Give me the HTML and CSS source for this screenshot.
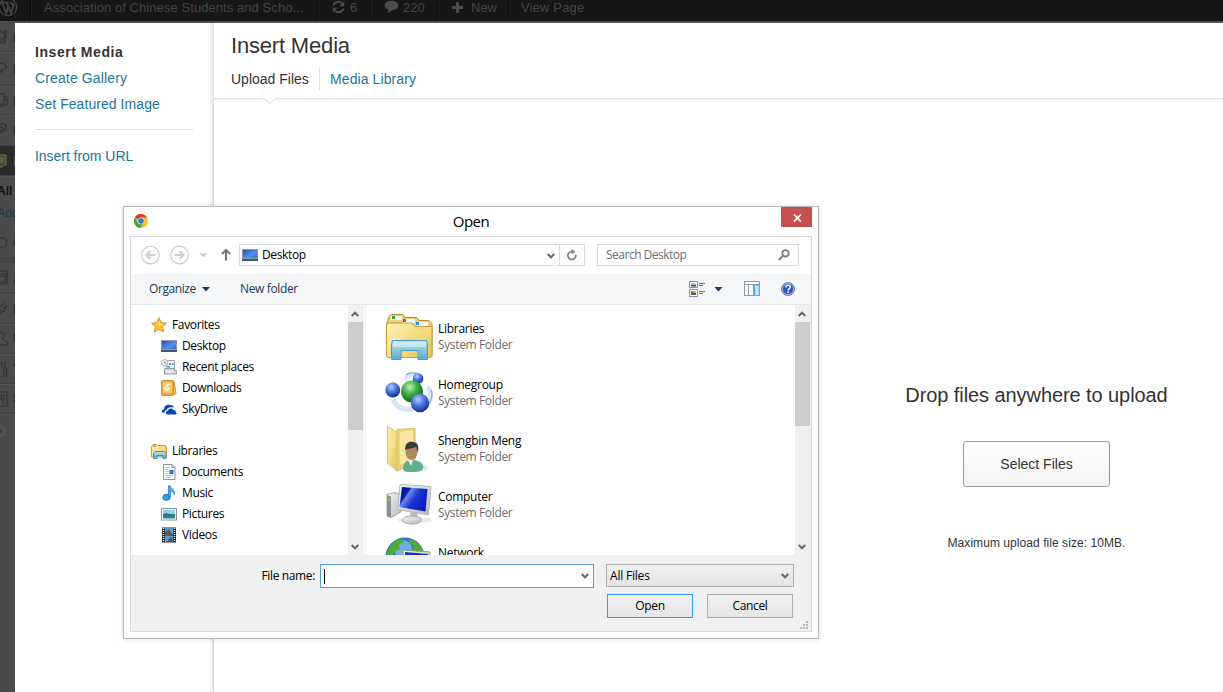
FILE: index.html
```html
<!DOCTYPE html>
<html lang="en">
<head>
<meta charset="utf-8">
<title>Insert Media</title>
<link rel="stylesheet" href="styles.css">
</head>
<body>
<svg class="defs" width="0" height="0">
  <defs>
    <linearGradient id="screen" x1="0" y1="0" x2="1" y2="1"><stop offset="0" stop-color="#2450a8"/><stop offset=".6" stop-color="#5590ee"/><stop offset="1" stop-color="#3468cc"/></linearGradient>
    <linearGradient id="folder" x1="0" y1="0" x2="1" y2="1"><stop offset="0" stop-color="#fdf3b4"/><stop offset="1" stop-color="#e9c552"/></linearGradient>
    <linearGradient id="stand" x1="0" y1="0" x2="0" y2="1"><stop offset="0" stop-color="#b9e6f6"/><stop offset="1" stop-color="#4ba8d8"/></linearGradient>
    <radialGradient id="blueball" cx=".4" cy=".3" r=".7"><stop offset="0" stop-color="#b4cdff"/><stop offset=".5" stop-color="#4a74e0"/><stop offset="1" stop-color="#14308f"/></radialGradient>
    <radialGradient id="greenball" cx=".4" cy=".3" r=".7"><stop offset="0" stop-color="#c3f3b4"/><stop offset=".5" stop-color="#36a83c"/><stop offset="1" stop-color="#0d6a1c"/></radialGradient>
    <linearGradient id="monitor" x1="0" y1="0" x2="1" y2=".6"><stop offset="0" stop-color="#000d86"/><stop offset=".3" stop-color="#0a1fae"/><stop offset=".36" stop-color="#6b8cf0"/><stop offset=".6" stop-color="#1c37d0"/><stop offset="1" stop-color="#0819c4"/></linearGradient>
    <linearGradient id="metal" x1="0" y1="0" x2="1" y2="1"><stop offset="0" stop-color="#f6f6f6"/><stop offset="1" stop-color="#b5b8bc"/></linearGradient>
    <symbol id="desktop" viewBox="0 0 16 14"><path d="M0 1h16v12H0z" fill="#8c9bb4"/><path d="M1 2h14v8H1z" fill="url(#screen)"/><path d="M0 11h16v2H0z" fill="#46546e"/></symbol>
    <symbol id="chev" viewBox="0 0 8 6"><path d="M.7 1 4 4.300 7.300 1" fill="none" stroke="#666" stroke-width="2"/></symbol>
    <symbol id="chevup" viewBox="0 0 8 6"><path d="M.7 5 4 1.700 7.300 5" fill="none" stroke="#666" stroke-width="2"/></symbol>
  </defs>
</svg>
<div class="page">
  <header class="adminbar">
    <div class="ab wp"><svg width="20" height="20" viewBox="0 0 20 20"><circle cx="10" cy="10" r="8.7" fill="none" stroke="#444" stroke-width="1.3"/><path d="M4 5.500 8.300 16 10.200 10 8.600 5.500M8.600 5.500 13 16l3.200-9.500M2.500 5.500h8M12 5l3 3" fill="none" stroke="#444" stroke-width="1.900"/></svg></div>
    <div class="ab site">Association of Chinese Students and Scho...</div>
    <div class="ab upd"><svg width="15" height="14" viewBox="0 0 14 14"><path d="M1.800 5.500C3 1.500 8 .8 10.500 3.300M12.200 8.500C11 12.500 6 13.200 3.500 10.700" fill="none" stroke="#4b4b4b" stroke-width="2"/><path d="M12.800 1.200v5H8zM1.200 12.800v-5H6z" fill="#4b4b4b"/></svg><span>6</span></div>
    <div class="ab com"><svg width="15" height="14" viewBox="0 0 15 14"><path d="M7.500.8c4 0 6.800 2 6.800 4.800S11.500 10.300 8 10.300L3.800 13.600l.5-3.800C2 9 .7 7.500.7 5.600.7 2.800 3.500.8 7.500.8z" fill="#4b4b4b"/></svg><span>220</span></div>
    <div class="ab new"><svg width="11" height="11" viewBox="0 0 11 11"><path d="M4 0h3v4h4v3H7v4H4V7H0V4h4z" fill="#4b4b4b"/></svg><span>New</span></div>
    <div class="ab view">View Page</div>
  </header>
  <div class="below">
    <nav class="adminmenu">
      <div class="am h29"><svg width="8" height="16"><path d="M-6 8 1 2l6 6M5 7v7H-4M1 14V9h3v5M4 4V2h2v4" class="ln"/></svg><b>D</b></div>
      <div class="am h34"><svg width="8" height="16"><path d="M0 3l3-1 4 4-2 2-2 0-3 4M0 9l3 2" class="ln"/></svg><b>P</b></div>
      <div class="am h29"><svg width="8" height="16"><path d="M0 2h4v10H0M4 5h3v8H5M4 8h3M0 12h3v2H0" class="ln"/></svg><b>M</b></div>
      <div class="am h31"><svg width="8" height="16"><path d="M0 3c3-3 7-1 6 3-1 3-4 4-6 5M0 6c1-2 4-1 3 1L0 9" class="ln"/></svg><b>L</b></div>
      <div class="am h30 on"><svg width="8" height="16"><path d="M0 2h6v10H4l-2 2H0M0 5h4M0 7h4M0 9h4" class="lt"/></svg><b>P</b></div>
      <div class="sub"><span class="all">All</span><span class="add">Add</span></div>
      <div class="am h30"><svg width="8" height="16"><path d="M0 3h3c5 0 5 9 0 9H0" class="ln"/></svg><b>C</b></div>
      <div class="am h36 gap"><svg width="8" height="16"><path d="M0 1h7v13H0M0 4h7M0 6h5v6H0" class="ln"/></svg><b>A</b></div>
      <div class="am h30"><svg width="8" height="16"><path d="M0 6 4 2M3 8l4-4M0 9c4 3 6 0 6-3M0 13l3-3" class="ln"/></svg><b>P</b></div>
      <div class="am h30"><svg width="8" height="16"><path d="M0 1c5 0 5 6 2 7 4 0 6 4 5 6H0" class="ln"/></svg><b>U</b></div>
      <div class="am h30"><svg width="8" height="16"><path d="M0 2h2v5M5 0v7M3.500 8h3v7h-3z" class="ln"/></svg><b>T</b></div>
      <div class="am h30"><svg width="8" height="16"><path d="M0 1h7v14H0M1 4h3v4H1zM3 8v5" class="ln"/></svg><b>S</b></div>
      <div class="am h34 last"><svg width="8" height="16"><circle cx="0" cy="8" r="7.500" fill="#525252" stroke="#444"/><path d="M-1 8l3-3v6z" fill="#3c3c3c"/></svg></div>
    </nav>
    <div class="modal">
      <aside class="side">
        <span class="link current">Insert Media</span>
        <span class="link">Create Gallery</span>
        <span class="link feat">Set Featured Image</span>
        <hr>
        <span class="link url">Insert from URL</span>
      </aside>
      <main class="main">
        <div class="head">
          <h1>Insert Media</h1>
          <div class="tabs"><span class="tab active">Upload Files</span><span class="tab">Media Library</span></div>
          <svg class="notch" width="12" height="7"><path d="M0 0h12L6 5.500z" fill="#fff"/><path d="M.5.5 6 5.500 11.500.5" fill="none" stroke="#dfdfdf"/></svg>
        </div>
        <div class="drop">
          <h2>Drop files anywhere to upload</h2>
          <div class="select">Select Files</div>
          <p>Maximum upload file size: 10MB.</p>
        </div>
      </main>
    </div>
  </div>

  <section class="dialog">
    <div class="titlebar">
      <svg class="chrome" width="16" height="16" viewBox="0 0 16 16"><circle cx="8" cy="8" r="7" fill="#f4c91f"/><path d="M8 8 1.900 4.500A7 7 0 0 1 14.100 4.500H8z" fill="#d93a2b"/><path d="M1.900 4.500A7 7 0 0 0 7.500 15L11 9.500 8 8 4.900 9.700z" fill="#3fa648"/><circle cx="8" cy="8" r="3.500" fill="#dbe8f2"/><circle cx="8" cy="8" r="2.800" fill="#3b7bc4"/></svg>
      <span class="dtitle">Open</span>
      <div class="close"><svg width="9" height="8" viewBox="0 0 9 8"><path d="M1 .5 8 7.500M8 .5 1 7.500" stroke="#fff" stroke-width="1.700"/></svg></div>
    </div>
    <div class="inner">
      <div class="nav">
        <svg width="108" height="37" viewBox="131 237 108 37" fill="none">
          <g stroke="#cdcdcd"><circle cx="150.500" cy="255" r="8.800" stroke-width="1.200"/><circle cx="179.500" cy="255" r="8.800" stroke-width="1.200"/><path d="M155.500 255h-9M150.500 251l-4 4 4 4M174.500 255h9M179.500 251l4 4-4 4" stroke-width="2.200"/></g>
          <path d="M199.500 253.500h7.500l-3.700 3.700z" fill="#c9c9c9"/>
          <path d="M226 260.500v-10M222 254l4-4 4 4" stroke="#777" stroke-width="2"/>
        </svg>
        <div class="address"><svg width="16" height="14"><use href="#desktop"/></svg><span>Desktop</span><svg class="achev" width="8" height="6"><use href="#chev"/></svg>
          <div class="refresh"><svg width="12" height="12" viewBox="0 0 12 12"><path d="M7 2.700A4 4 0 1 0 9.800 6" fill="none" stroke="#808080" stroke-width="1.700"/><path d="M5.500 0 9.500 2.700 5.500 5.300z" fill="#808080"/></svg></div>
        </div>
        <div class="search"><span>Search Desktop</span><svg width="12" height="12" viewBox="0 0 12 12"><circle cx="7.500" cy="4.300" r="3.200" fill="none" stroke="#808080" stroke-width="1.900"/><path d="M5 6.800.8 11" stroke="#808080" stroke-width="2"/></svg></div>
      </div>
      <div class="toolbar">
        <span class="org">Organize</span><svg class="c1" width="8" height="5"><path d="M0 0h8L4 4.500z" fill="#1e395b"/></svg>
        <span class="nf">New folder</span>
        <svg class="tools" width="120" height="30" viewBox="685 274 120 30">
          <g fill="#fff" stroke="#8593a8"><rect x="689.500" y="281.500" width="8" height="6"/><rect x="689.500" y="289.500" width="8" height="7"/></g>
          <path d="M691 283h5v2h-5z" fill="#8fd0e8"/><path d="M691 285h5v1.500h-5z" fill="#264c6c"/><path d="M691 291h3v2h-3z" fill="#53a63d"/><path d="M694 291h2v2h-2z" fill="#eeb331"/><path d="M691 293h2v2h-2z" fill="#d5362f"/><path d="M693 293h3v2h-3z" fill="#375abe"/>
          <path d="M699 283.500h6M699 285.500h4M699 291.500h6M699 293.500h4" stroke="#6b7280"/>
          <path d="M714.500 287h8l-4 4.500z" fill="#1e395b"/>
          <rect x="744.500" y="281.500" width="15" height="14" fill="#fff" stroke="#8f979f"/><path d="M744 284.500h16M748.500 284v12M753.500 284v12" stroke="#8f979f"/><path d="M754.500 285h5v10.500h-5z" fill="#b9e0fa" stroke="#5aa5e2"/>
          <circle cx="788" cy="289" r="6.500" fill="#2b55c0" stroke="#7683a5"/><circle cx="788" cy="289" r="5.600" fill="none" stroke="#c3d1f2" stroke-width=".8"/><path d="M785.900 287.400c0-2.900 4.400-2.700 4.400-.2 0 1.500-2.200 1.500-2.200 3.200M788.100 291.300v1.600" fill="none" stroke="#fff" stroke-width="1.500"/>
        </svg>
      </div>
      <div class="content">
        <div class="tree">
          <div class="row top"><svg width="16" height="16" viewBox="0 0 16 16"><path d="M8 .8 10.200 5.700 15.500 6.200 11.500 9.800 12.800 15 8 12.300 3.200 15 4.500 9.800.5 6.200 5.800 5.700z" fill="#fbc43d" stroke="#e58a1f"/><path d="M8 3 9.400 6.600 12.500 7 8 9z" fill="#fff0a8"/></svg><span>Favorites</span></div>
          <div class="row"><svg width="16" height="14"><use href="#desktop"/></svg><span>Desktop</span></div>
          <div class="row"><svg width="16" height="16" viewBox="0 0 16 16"><path d="M5 1.500h8.500v9H5z" fill="#f5f8fb" stroke="#a2a8b0"/><path d="M3.500 9.500h10v2h2v3.500h-12z" fill="#d8dce0" stroke="#989ea4"/><path d="M8 4h2v2H8zM11 4h1.500v2H11zM6 7h3v1.500H6z" fill="#3a93d9"/><path d="M5.500 13h6" stroke="#fff"/><circle cx="3.700" cy="3.700" r="3.200" fill="#fff" stroke="#aaa"/><path d="M3.700 2v2h1.500" fill="none" stroke="#777"/></svg><span>Recent places</span></div>
          <div class="row"><svg width="16" height="16" viewBox="0 0 16 16"><path d="M10 1.500h3l2 12-3 1.500z" fill="#f6ce7a" stroke="#cf9427"/><rect x=".5" y=".5" width="12" height="15" rx="1" fill="#f5a83a" stroke="#d98a1d"/><path d="M2 2h9v11H2z" fill="#f9c774"/><path d="M10 4C6.500 4 5 6 5 9M2.500 7.500 5 10.500 8.500 8" fill="none" stroke="#fff4d6" stroke-width="1.600"/></svg><span>Downloads</span></div>
          <div class="row"><svg width="16" height="16" viewBox="0 0 16 16"><path d="M3.500 12C0 12 .2 8.500 3 8.300 3 5 6 3 9 4.200c2-.8 3.500.6 3.800 2.600C9 5.500 6 7 6 8.800 3.800 9.200 3.200 11 3.500 12z" fill="#0b47b4"/><path d="M6.500 13.500c-2.500-.5-2-3.700.6-3.900.3-2.500 4.200-3.100 5.400-.6 2.200 0 2.200 1.500 2.100 1.900 1.600.6 1.100 2.600-.6 2.600z" fill="#0b47b4"/></svg><span>SkyDrive</span></div>
          <div class="row"></div>
          <div class="row top"><svg width="16" height="16" viewBox="0 0 16 16"><path d="M.5 3.500 2 1.500h4l1 1h7.500l1 1.500v10H.5z" fill="url(#folder)" stroke="#c99b3d"/><path d="M2 3h3" stroke="#45a545"/><path d="M2.500 15.500v-5l1.500-2h9.500l1.500 2v5h-3v-3h-6v3z" fill="url(#stand)" stroke="#3a93c8"/></svg><span>Libraries</span></div>
          <div class="row"><svg width="16" height="16" viewBox="0 0 16 16"><path d="M2.500.5h8.500l3 3v12H2.500z" fill="#fbfcfe" stroke="#8a93a0"/><path d="M11 .5v3h3" fill="#e0e5ec" stroke="#8a93a0"/><path d="M4.500 3.500h4M4.500 5.500h3M4.500 7.500h3M4.500 9.500h3M4.500 11.500h8M4.500 13.500h6" stroke="#b6b4d8"/><path d="M8.500 6h4v4h-4z" fill="#2d6fbb"/></svg><span>Documents</span></div>
          <div class="row"><svg width="16" height="16" viewBox="0 0 16 16"><ellipse cx="5.500" cy="12.300" rx="3.700" ry="3" fill="#2f9fe0" stroke="#1676bb"/><path d="M7.500 12V.8h1.700c.5 3 4.600 3.500 4.300 8.700-1-2.500-2.200-3.200-4-3.500v6z" fill="#46aee8" stroke="#1b79bb" stroke-width=".7"/></svg><span>Music</span></div>
          <div class="row"><svg width="16" height="14" viewBox="0 0 16 14"><rect x=".5" y="1.500" width="15" height="11.500" fill="#fff" stroke="#8c949c"/><path d="M2 3h12v5H2z" fill="#8fd0f2"/><path d="M2 7.500c4-3 7 1 12-.5V9H2z" fill="#2d7f59"/><path d="M2 9h12v2.500H2z" fill="#2b82a8"/></svg><span>Pictures</span></div>
          <div class="row"><svg width="16" height="16" viewBox="0 0 16 16"><path d="M1 .5h14v15H1z" fill="#23262c"/><path d="M4 1h8v6.500H4zM4 8.500h8V15H4z" fill="#4aa3dc"/><path d="M4 5l4-3 3 5.500H4zM5 15l5-5 2 5z" fill="#735044"/><path d="M2.500 1v14M13.500 1v14" stroke="#e7edf2" stroke-width="1.500" stroke-dasharray="1 1"/></svg><span>Videos</span></div>
        </div>
        <div class="scroll"><svg width="8" height="6"><use href="#chevup"/></svg><i class="thumb t1"></i><svg width="8" height="6"><use href="#chev"/></svg></div>
        <div class="split"></div>
        <div class="files">
          <div class="file"><svg width="48" height="48" viewBox="0 0 48 48"><path d="M1.500 11 4 3.500 6 1.500h12l2 3h12l2 3h10l3 3v33H1.500z" fill="#e8cf7d" stroke="#b98f33"/><path d="M6 3h11v4H6zM18 6h12v4H18zM31 9h12v4H31z" fill="#fff"/><path d="M7 3h3v3H7z" fill="#35a24a"/><path d="M18 6h3v3h-3z" fill="#d44b20"/><path d="M31 9h3v3h-3z" fill="#2c8fce"/><path d="M1.500 12 3 10h24l3 3.500h17V42l-1.500 2.500h-43l-1-1.500z" fill="url(#folder)" stroke="#c49a3c"/><path d="M9 18l1.500 10 7.500-5-6 7 8 1-8 1-2 8-1-8-7-1 7-2-5-6 5 4z" fill="#fff" opacity=".5"/><path d="M6.500 46.500V31l1-3.500h34l1 3.500v15.500h-9.500V37.500H16v9z" fill="url(#stand)" fill-opacity=".9" stroke="#4a9dc9"/><path d="M8 29h33v5H8z" fill="#def4fb" opacity=".6"/></svg><div><strong>Libraries</strong><em>System Folder</em></div></div>
          <div class="file"><svg width="48" height="48" viewBox="0 0 48 48"><path d="M22 12C20 5 28 4 34 6M42 18c6 5 4 14-1 19M8 30c3 9 12 12 20 10" fill="none" stroke="#dbe6f4" stroke-width="5"/><path d="M21 6c4-3 10-2 14 0M46 21c2 5 0 11-3 15" fill="none" stroke="#8fabd4" stroke-width="1.200"/><circle cx="33" cy="9.500" r="5.300" fill="url(#blueball)"/><circle cx="7.800" cy="21" r="7.400" fill="url(#blueball)"/><circle cx="27" cy="22.500" r="11" fill="url(#greenball)"/><circle cx="35" cy="34" r="9.200" fill="url(#blueball)"/></svg><div><strong>Homegroup</strong><em>System Folder</em></div></div>
          <div class="file"><svg width="48" height="48" viewBox="0 0 48 48"><ellipse cx="31" cy="43" rx="12" ry="3.500" fill="#e2e2e2"/><path d="M12 4.500 30 3.500V38L12 46z" fill="#eed277" stroke="#d9b860"/><path d="M15 7l13-2v30l-13 5z" fill="#f8e7a0"/><path d="M2.500 1.500 12 7v39L2.500 38z" fill="url(#folder)" stroke="#dfc274"/><path d="M18 45c0-8 4-10 8-10 8 0 13 3 12 8-1 4-6 4-12 4-4 0-6 0-8-2z" fill="#5fae8c"/><path d="M23 35l3 6 2-6z" fill="#eee"/><ellipse cx="26.500" cy="27" rx="6" ry="8" fill="#b08860"/><path d="M20 25c0-7 4-9 8-8 5 0 6 4 5 11l-2-6c-4 2-8 1-11 3z" fill="#3a3a36"/></svg><div><strong>Shengbin Meng</strong><em>System Folder</em></div></div>
          <div class="file"><svg width="48" height="48" viewBox="0 0 48 48"><ellipse cx="30" cy="39" rx="17" ry="3" fill="#e8e8e8"/><path d="M2 13.500 9 11.500l7 2V31L6 36.500 2 35z" fill="url(#metal)" stroke="#a5a8ab"/><path d="M2 14l4 1.500v21L2 35z" fill="#8b8f93"/><path d="M3 17l2 1v3l-2-1z" fill="#6fdc35"/><path d="M25 30h8l-1 8h-6z" fill="#bbb"/><ellipse cx="27" cy="39" rx="9.500" ry="4" fill="url(#metal)" stroke="#a4a4a4"/><path d="M15 3.500 46 5.500 43.500 34 12.500 28.500z" fill="url(#metal)" stroke="#b6b8ba"/><path d="M17 6 42.500 8 40.500 30.500 14.500 26z" fill="url(#monitor)"/></svg><div><strong>Computer</strong><em>System Folder</em></div></div>
          <div class="file"><svg width="48" height="48" viewBox="0 0 48 48"><circle cx="20" cy="20" r="19.500" fill="#2d77c4"/><circle cx="18" cy="12" r="9" fill="#8cc9ee" opacity=".7"/><path d="M3 13C7 5 12 2 17 2l2 3-5 3 1 4-6 3-3 6-4-2zM24 2c7 1 12 6 14 12l-5 3-6-4 2-4-5-3z" fill="#4faa36"/><path d="M18 13l27 2-1 20-26-3z" fill="url(#metal)" stroke="#8d9096"/><path d="M20 15l23 2-1 16-22-3z" fill="#1237bb"/></svg><div><strong>Network</strong><em>System Folder</em></div></div>
        </div>
        <div class="scroll r"><svg width="8" height="6"><use href="#chevup"/></svg><i class="thumb t2"></i><svg width="8" height="6"><use href="#chev"/></svg></div>
      </div>
      <div class="foot">
        <div class="frow"><label>File name:</label><div class="input"><i></i><svg width="8" height="6"><use href="#chev"/></svg></div><div class="combo"><span>All Files</span><svg width="8" height="6"><use href="#chev"/></svg></div></div>
        <div class="frow btns"><div class="btn primary">Open</div><div class="btn">Cancel</div></div>
        <svg class="grip" width="9" height="9"><path d="M6 0h2v2H6zM3 3h2v2H3zM6 3h2v2H6zM0 6h2v2H0zM3 6h2v2H3zM6 6h2v2H6z" fill="#bcbcbc"/></svg>
      </div>
    </div>
  </section>
</div>
</body>
</html>
```
FILE: styles.css
```css
* { box-sizing: border-box; }
body { margin: 0; font-family: "Liberation Sans", Arial, sans-serif; }
svg { display: block; flex: none; }
.defs { position: absolute; }
.page { position: relative; width: 1223px; height: 692px; overflow: hidden; background: #4d4d4d; display: flex; flex-direction: column; }

/* admin bar */
.adminbar { height: 21px; flex: none; display: flex; background: #161616; color: #454545; font-size: 13px; overflow: hidden; }
.ab { flex: none; height: 28px; margin-top: -7px; display: flex; align-items: center; border-right: 1px solid #0d0d0d; box-shadow: 1px 0 #1f1f1f; white-space: nowrap; }
.wp { width: 31px; }
.wp svg { margin-left: -2px; }
.site { width: 287px; padding-left: 13px; letter-spacing: .07px; }
.upd { width: 53px; padding-left: 13px; gap: 4px; }
.com { width: 67px; padding-left: 13px; gap: 4px; }
.new { width: 71px; padding-left: 14px; gap: 8px; }
.view { padding-left: 12px; border: 0; box-shadow: none; letter-spacing: .15px; }

.below { flex: 1; display: flex; min-height: 0; }
.adminmenu { width: 15px; flex: none; padding-top: 2px; overflow: hidden; background: #4b4b4b; }
.am { display: flex; align-items: center; border-bottom: 1px solid #414141; box-shadow: 0 1px #535353; overflow: hidden; font-size: 13px; color: #1d2b35; }
.am b { margin-left: 5px; }
.h29 { height: 29px; } .h30 { height: 30px; } .h31 { height: 31px; } .h34 { height: 34px; } .h36 { height: 36px; }
.gap { border-top: 5px solid #444; }
.on { background: #2b2b2b; color: #555; }
.last { border: 0; box-shadow: none; }
.ln { fill: none; stroke: #333; stroke-width: 1.2; }
.lt { fill: #4a463b; stroke: #77705d; }
.sub { height: 52px; padding-top: 4px; font-size: 12px; line-height: 22px; display: flex; flex-direction: column; }
.all { color: #111; font-weight: bold; margin-left: -3px; }
.add { color: #163a4b; margin-left: -3px; }

/* media modal */
.modal { flex: 1; margin-top: 2px; display: flex; background: #fff; }
.side { width: 199px; flex: none; padding: 16px 20px 0 20px; border-right: 1px solid #d9d9d9; box-shadow: inset -5px 0 4px -4px #ddd; display: flex; flex-direction: column; align-items: flex-start; }
.link { font-size: 14px; line-height: 26px; color: #21759b; letter-spacing: .13px; white-space: nowrap; }
.current { color: #333; font-weight: bold; letter-spacing: .55px; }
.feat { letter-spacing: .06px; }
.url { letter-spacing: -.04px; }
.side hr { align-self: stretch; margin: 12px 0 13px; border: 0; border-top: 1px solid #dfdfdf; }
.main { flex: 1; }
.head { position: relative; height: 76px; padding-left: 17px; border-bottom: 1px solid #dfdfdf; box-shadow: 0 1px 2px #f0f0f0; }
.head h1 { margin: 0; padding-top: 8px; font-size: 22px; line-height: 29px; font-weight: normal; letter-spacing: -.18px; color: #333; }
.tabs { display: flex; margin-top: 8px; font-size: 14px; line-height: 22px; color: #21759b; }
.tab + .tab { padding-left: 10px; border-left: 1px solid #dfdfdf; letter-spacing: .09px; }
.tab.active { width: 88px; color: #333; }
.notch { position: absolute; left: 50px; top: 75px; }
.drop { margin-left: 636px; width: 373px; display: flex; flex-direction: column; align-items: center; color: #333; }
.drop h2 { margin: 283px 0 0; font-size: 20px; line-height: 26px; font-weight: normal; letter-spacing: -.08px; }
.select { margin-top: 33px; width: 147px; height: 46px; border: 1px solid #999; border-radius: 3px; background: linear-gradient(#fff, #f3f3f3); font-size: 14px; line-height: 44px; text-align: center; }
.drop p { margin: 48px 0 0; font-size: 12px; line-height: 16px; letter-spacing: .06px; }

/* file dialog */
.dialog { position: absolute; left: 123px; top: 206px; width: 696px; height: 433px; border: 1px solid #b9b9b9; background: #fff; box-shadow: 0 0 5px rgba(0,0,0,.15); padding: 0 6px; font-family: "Open Sans", "Noto Sans", sans-serif; font-size: 12px; letter-spacing: -.36px; color: #000; }
.titlebar { height: 29px; display: flex; align-items: flex-start; }
.chrome { margin: 6px 0 0 3px; }
.dtitle { flex: 1; text-align: center; font-size: 15px; line-height: 29px; padding-left: 12px; letter-spacing: -.5px; }
.close { width: 31px; height: 20px; background: #c75050; display: flex; align-items: center; justify-content: center; padding: 1px 0 0 1px; }
.inner { width: 682px; height: 396px; border: 1px solid #d9d9d9; }
.nav { height: 37px; display: flex; align-items: flex-start; }
.address { margin-top: 7px; width: 346px; height: 22px; border: 1px solid #d9d9d9; display: flex; align-items: center; padding-left: 2px; }
.address span { margin-left: 4px; flex: 1; line-height: 20px; margin-top: -1px; }
.achev { margin: 1px 4px 0 0; }
.refresh { width: 25px; height: 20px; border-left: 1px solid #d9d9d9; display: flex; align-items: center; justify-content: center; }
.search { margin: 7px 0 0 12px; width: 202px; height: 22px; border: 1px solid #d9d9d9; display: flex; align-items: center; justify-content: space-between; padding: 0 8px; color: #6d6d6d; letter-spacing: -.5px; }
.search span { line-height: 20px; margin-top: -1px; }
.toolbar { height: 31px; background: #f5f6f7; border-bottom: 1px solid #e3e7eb; display: flex; align-items: center; color: #1e395b; padding-left: 18px; }
.org { width: 53px; letter-spacing: -.42px; margin-top: -1px; }
.nf { margin: -1px 0 0 30px; width: 445px; }
.content { height: 250px; display: flex; overflow: hidden; }
.tree { width: 217px; padding-top: 9px; }
.row { height: 21px; display: flex; align-items: center; padding-left: 30px; gap: 5px; }
.row.top { padding-left: 20px; }
.scroll { width: 16px; flex: none; background: #f0f0f0; display: flex; flex-direction: column; align-items: flex-start; padding: 6px 0 5px; }
.scroll svg { margin-left: 3px; }
.thumb { width: 15px; background: #cdcdcd; margin: 5px 0 auto; }
.t1 { height: 108px; } .t2 { height: 104px; }
.split { width: 2px; border-right: 1px solid #f0f0f0; }
.files { width: 429px; padding: 4px 0 0 19px; overflow: hidden; }
.file { height: 56px; display: flex; align-items: center; gap: 5px; line-height: 16px; }
.file strong, .file em { display: block; font-weight: normal; font-style: normal; }
.file strong { letter-spacing: -.28px; }
.file em { color: #6d6d6d; }
.foot { position: relative; height: 76px; padding-top: 9px; background: #f0f0f0; }
.frow { display: flex; height: 24px; }
.frow label { width: 184px; text-align: right; line-height: 24px; }
.input { margin-left: 5px; width: 274px; border: 1px solid #569de5; background: #fff; display: flex; align-items: center; justify-content: space-between; padding: 0 4px 0 3px; }
.input i { width: 1px; height: 15px; background: #000; }
.combo { margin-left: 12px; width: 188px; height: 23px; border: 1px solid #acacac; background: linear-gradient(#f0f0f0, #e5e5e5); display: flex; align-items: center; justify-content: space-between; padding: 0 4px 0 3px; letter-spacing: -.2px; }
.btns { margin-top: 6px; padding-left: 476px; gap: 14px; }
.btn { width: 86px; border: 1px solid #acacac; background: linear-gradient(#f0f0f0, #e5e5e5); text-align: center; line-height: 22px; }
.primary { border-color: #3399ff; }
.grip { position: absolute; right: 2px; bottom: 1px; }
```
